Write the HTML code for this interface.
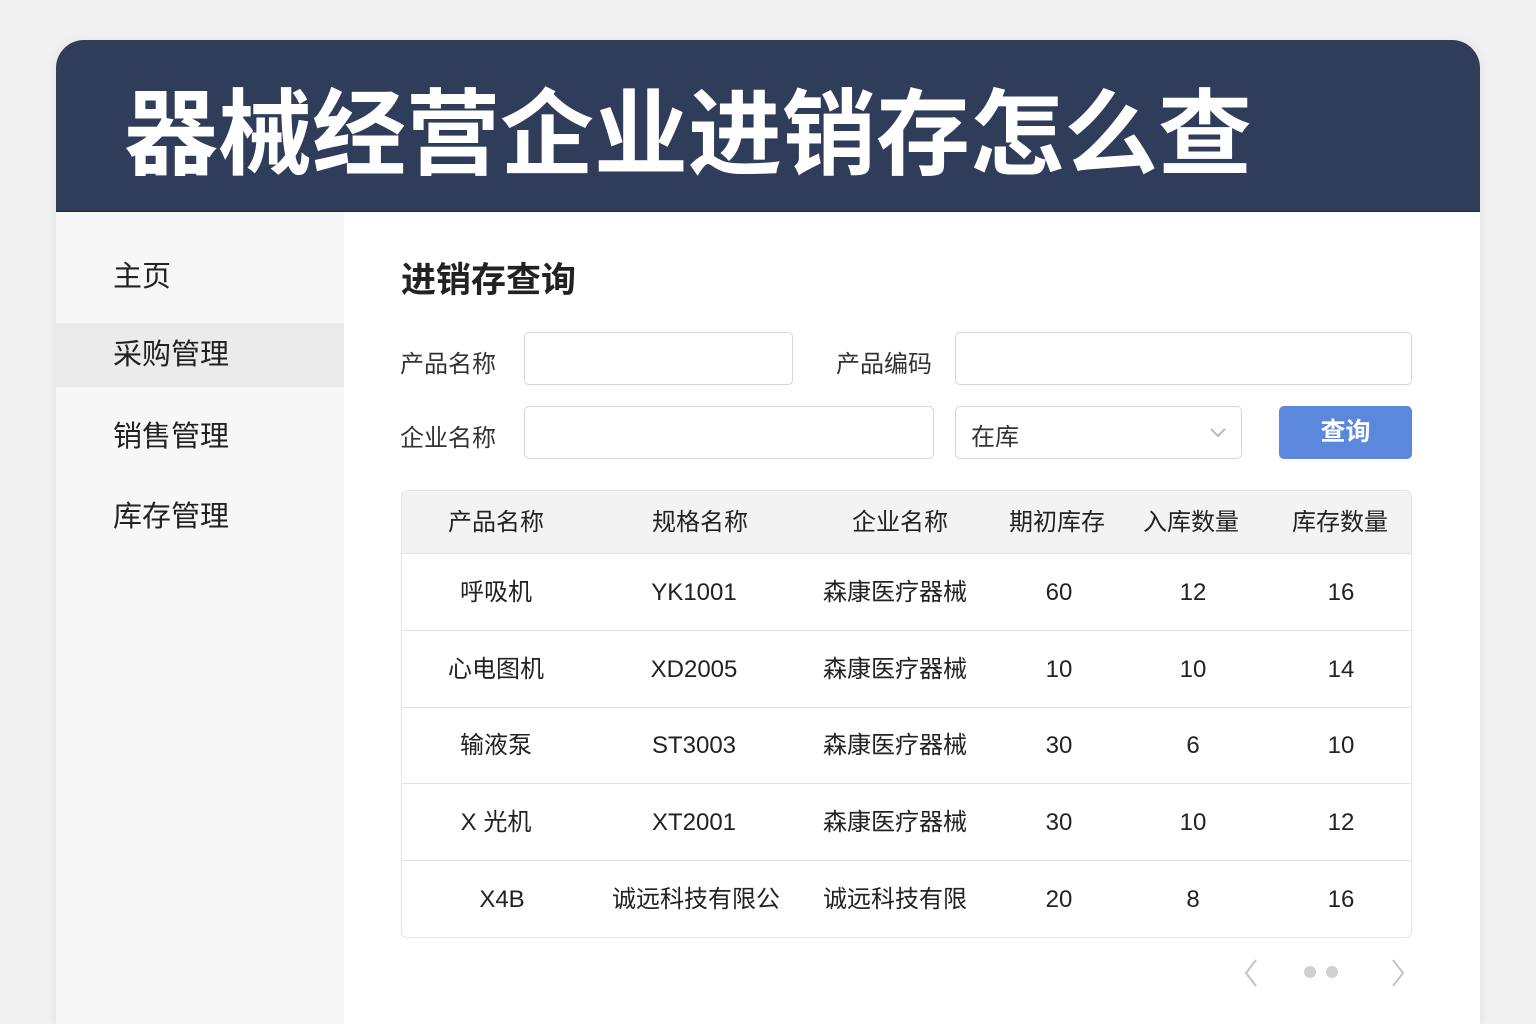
<!DOCTYPE html>
<html><head><meta charset="utf-8"><style>
*{margin:0;padding:0;box-sizing:border-box}
html,body{overflow:hidden}
body{width:1536px;height:1024px;background:#f1f1f1;font-family:"Liberation Sans","Noto Sans CJK SC",sans-serif;position:relative;overflow:hidden;color:#222}
.card{position:absolute;left:56px;top:40px;width:1424px;height:984px;border-radius:28px 28px 0 0;overflow:hidden;background:#fff;box-shadow:0 2px 12px rgba(0,0,0,.08)}
.hdr{position:absolute;left:0;top:0;width:1424px;height:172px;background:#2f3d5a;border-bottom:1px solid #1d2740}
.hdr h1{position:absolute;left:68px;top:40px;font-size:94px;font-weight:bold;color:#fff;line-height:110px;white-space:nowrap}
.side{position:absolute;left:0;top:172px;width:288px;height:812px;background:#f7f7f7}
.side div{position:absolute;left:0;width:288px;height:64px;line-height:64px;padding-left:57px;font-size:29px;color:#222}
.side .act{background:#ebebeb}
.a{position:absolute}
.lbl{font-size:24px;color:#333;position:absolute}
.inp{position:absolute;height:53px;border:1px solid #d6d6d6;border-radius:5px;background:#fff}
.btn{position:absolute;left:1279px;top:406px;width:133px;height:53px;background:#5b87dc;border-radius:5px;color:#fff;font-size:25px;font-weight:bold;text-align:center;line-height:53px}
.tbl{position:absolute;left:401px;top:490px;width:1011px;height:448px;border:1px solid #e6e6e6;border-radius:6px;overflow:hidden}
.row{position:absolute;left:0;width:1011px;height:77px;border-bottom:1px solid #e3e3e3}
.row span{position:absolute;top:0;transform:translateX(-50%);font-size:24px;white-space:nowrap;line-height:77px;color:#222}
.th{background:#f3f3f3;height:63px;top:0}
.th span{line-height:63px}
</style></head><body>
<div class="card">
<div class="hdr"><h1>器械经营企业进销存怎么查</h1></div>
<div class="side">
<div style="top:33px">主页</div>
<div class="act" style="top:111px">采购管理</div>
<div style="top:193px">销售管理</div>
<div style="top:273px">库存管理</div>
</div>
</div>
<div class="a" style="left:401px;top:252px;font-size:35px;font-weight:bold;color:#222">进销存查询</div>
<div class="lbl" style="left:400px;top:344px">产品名称</div>
<div class="inp" style="left:524px;top:332px;width:269px"></div>
<div class="lbl" style="left:836px;top:344px">产品编码</div>
<div class="inp" style="left:955px;top:332px;width:457px"></div>
<div class="lbl" style="left:400px;top:418px">企业名称</div>
<div class="inp" style="left:524px;top:406px;width:410px"></div>
<div class="inp" style="left:955px;top:406px;width:287px"><span style="position:absolute;left:15px;top:10px;font-size:24px;color:#333">在库</span>
<svg style="position:absolute;right:14px;top:19px" width="18" height="12"><path d="M2 3 L9 10 L16 3" fill="none" stroke="#bbb" stroke-width="2"/></svg></div>
<div class="btn">查询</div>
<div class="tbl">
<div class="row th"><span style="left:94px">产品名称</span><span style="left:298px">规格名称</span><span style="left:498px">企业名称</span><span style="left:655px">期初库存</span><span style="left:789px">入库数量</span><span style="left:938px">库存数量</span></div>
<div class="row" style="top:63px"><span style="left:94px">呼吸机</span><span style="left:292px">YK1001</span><span style="left:493px">森康医疗器械</span><span style="left:657px">60</span><span style="left:791px">12</span><span style="left:939px">16</span></div>
<div class="row" style="top:140px"><span style="left:94px">心电图机</span><span style="left:292px">XD2005</span><span style="left:493px">森康医疗器械</span><span style="left:657px">10</span><span style="left:791px">10</span><span style="left:939px">14</span></div>
<div class="row" style="top:216px"><span style="left:94px">输液泵</span><span style="left:292px">ST3003</span><span style="left:493px">森康医疗器械</span><span style="left:657px">30</span><span style="left:791px">6</span><span style="left:939px">10</span></div>
<div class="row" style="top:293px"><span style="left:94px">X 光机</span><span style="left:292px">XT2001</span><span style="left:493px">森康医疗器械</span><span style="left:657px">30</span><span style="left:791px">10</span><span style="left:939px">12</span></div>
<div class="row" style="top:370px;border-bottom:none"><span style="left:100px">X4B</span><span style="left:294px">诚远科技有限公</span><span style="left:493px">诚远科技有限</span><span style="left:657px">20</span><span style="left:791px">8</span><span style="left:939px">16</span></div>
</div>
<svg class="a" style="left:1240px;top:956px" width="170" height="34">
<path d="M16 4 L6 17 L16 30" fill="none" stroke="#c4c4c4" stroke-width="2"/>
<circle cx="70" cy="16" r="6" fill="#d0d0d0"/><circle cx="92" cy="16" r="6" fill="#d0d0d0"/>
<path d="M153 4 L163 17 L153 30" fill="none" stroke="#c4c4c4" stroke-width="2"/>
</svg>
</body></html>
